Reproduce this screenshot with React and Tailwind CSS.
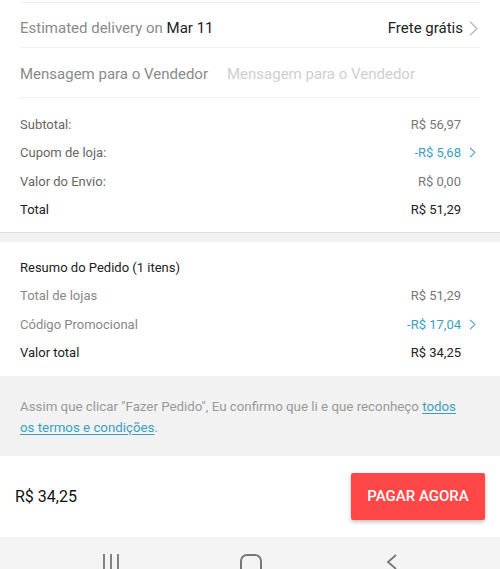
import React from 'react'

const Chevron = ({ className = '' }) => (
  <svg viewBox="0 0 8 14" className={className} fill="none" stroke="currentColor" strokeWidth="1.3">
    <path d="M1 1l6 6-6 6" />
  </svg>
)

const Row = ({ label, value, labelCls = 'text-[#666]', valueCls = 'text-[#777]', link }) => (
  <div className="flex h-[28.5px] items-center justify-between text-[13px]">
    <span className={labelCls}>{label}</span>
    <div className="flex items-center">
      <span className={valueCls}>{value}</span>
      {link ? (
        <Chevron className="ml-[8px] mr-[4px] h-[11px] w-[7px] text-[#3a9fc0]" />
      ) : (
        <span className="w-[19px]" />
      )}
    </div>
  </div>
)

export default function App() {
  return (
    <div className="flex h-[569px] w-[500px] flex-col bg-white font-['Roboto',sans-serif]">
      {/* entrega e mensagem */}
      <div className="px-5 pt-[2px]">
        <div className="flex h-[46px] items-center justify-between border-y border-[#f0f0f0] pt-[6px] text-[15px]">
          <span className="text-[#8a8a8a]">
            Estimated delivery on <span className="text-[#222]">Mar 11</span>
          </span>
          <span className="flex items-center text-[#222]">
            Frete grátis
            <Chevron className="ml-[6px] mr-[2px] h-[17px] w-[9px] text-[#bbb]" />
          </span>
        </div>
        <div className="flex h-[50px] items-center border-b border-[#f0f0f0] pt-[4px] text-[15px]">
          <span className="text-[#8a8a8a]">Mensagem para o Vendedor</span>
          <span className="ml-[19px] text-[#cfcfcf]">Mensagem para o Vendedor</span>
        </div>
      </div>

      {/* valores da loja */}
      <div className="px-5 pt-[12px] pb-[8px]">
        <Row label="Subtotal:" value="R$ 56,97" />
        <Row label="Cupom de loja:" value="-R$ 5,68" valueCls="text-[#3a9fc0]" link />
        <Row label="Valor do Envio:" value="R$ 0,00" />
        <Row label="Total" value="R$ 51,29" labelCls="text-[#222]" valueCls="text-[#222]" />
      </div>

      <div className="h-[10px] border-t border-[#dcdcdc] bg-[#f2f2f2]" />

      {/* resumo */}
      <div className="px-5 pt-[11px] pb-[9px]">
        <div className="flex h-[28.5px] items-center text-[13px] text-[#222]">Resumo do Pedido (1 itens)</div>
        <Row label="Total de lojas" value="R$ 51,29" labelCls="text-[#888]" />
        <Row label="Código Promocional" value="-R$ 17,04" labelCls="text-[#888]" valueCls="text-[#3a9fc0]" link />
        <Row label="Valor total" value="R$ 34,25" labelCls="text-[#222]" valueCls="text-[#222]" />
      </div>

      {/* termos */}
      <div className="h-[80px] bg-[#f2f2f2] px-5 pt-[20px] text-[13.3px] leading-[21px] text-[#999]">
        <p>
          Assim que clicar "Fazer Pedido", Eu confirmo que li e que reconheço{' '}
          <span className="text-[#3a9fc0] underline underline-offset-2">todos</span>
        </p>
        <p>
          <span className="text-[#3a9fc0] underline underline-offset-2">os termos e condições</span>.
        </p>
      </div>

      {/* pagar */}
      <div className="flex h-[81px] items-center justify-between pl-[15px] pr-[15px]">
        <span className="text-[16px] text-[#111]">R$ 34,25</span>
        <button className="h-[47px] w-[134px] rounded-[2px] bg-[#ff4747] text-[15px] font-medium text-white shadow-[0_2px_4px_rgba(0,0,0,0.25)]">
          PAGAR AGORA
        </button>
      </div>

      {/* barra de navegação */}
      <div className="relative flex-1 overflow-hidden bg-[#f4f4f4]">
        <svg className="absolute left-[102px] top-[17px]" width="18" height="20" viewBox="0 0 18 20" fill="none" stroke="#777" strokeWidth="1.8">
          <path d="M2 0v20M9 0v20M16 0v20" />
        </svg>
        <div className="absolute left-[240px] top-[17px] h-[22px] w-[22px] rounded-[7px] border-[2px] border-[#777]" />
        <svg className="absolute left-[386px] top-[17px]" width="12" height="18" viewBox="0 0 12 18" fill="none" stroke="#777" strokeWidth="1.8">
          <path d="M10 1L2 8l8 7" />
        </svg>
      </div>
    </div>
  )
}
